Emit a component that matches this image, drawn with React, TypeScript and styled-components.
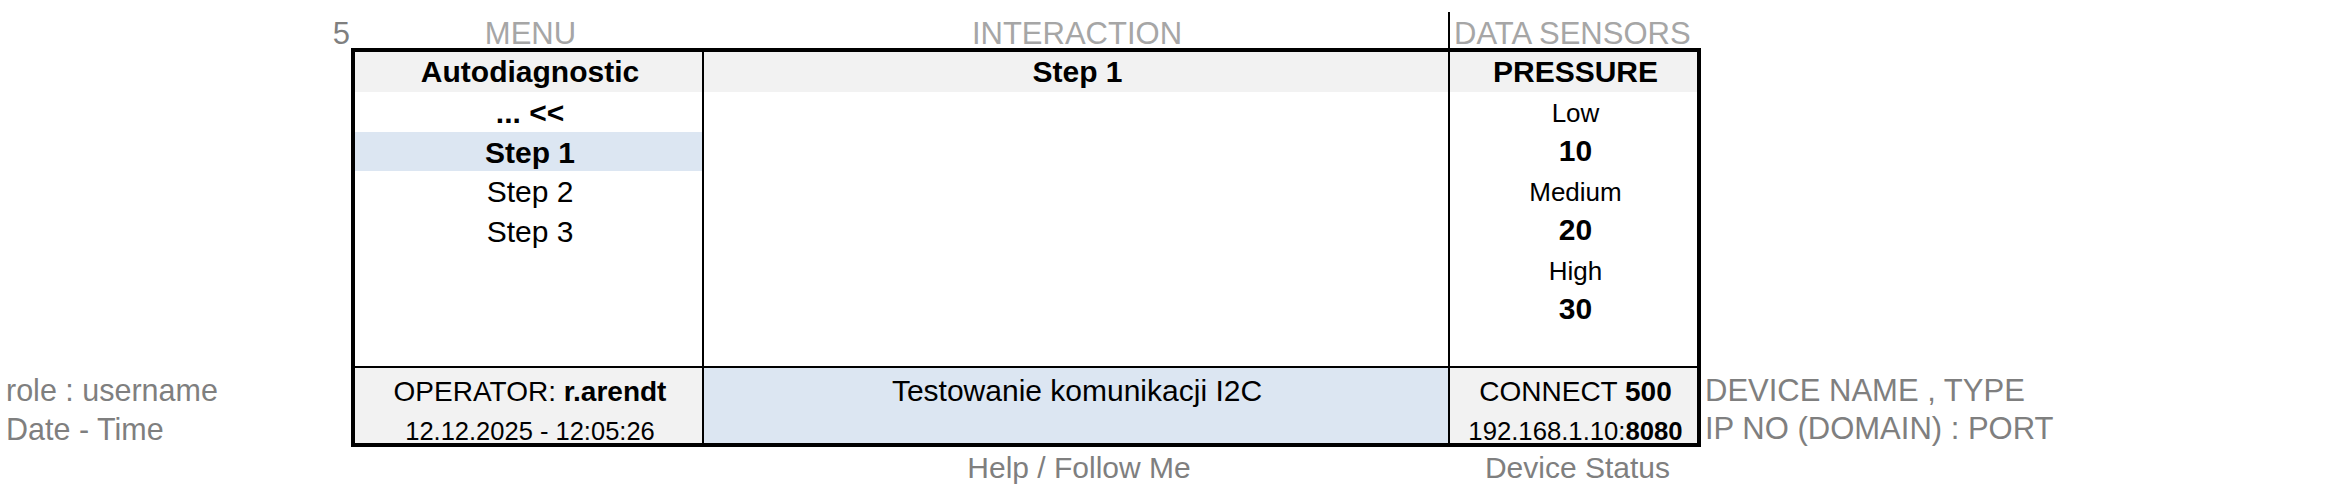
import React from "react";
import styled, { createGlobalStyle } from "styled-components";

const Global = createGlobalStyle`
  html, body { margin: 0; padding: 0; background: #ffffff; }
  * { box-sizing: border-box; }
`;

const Page = styled.div`
  width: 2339px;
  height: 496px;
  padding-top: 12px;
  display: flex;
  flex-direction: column;
  font-family: "Liberation Sans", Arial, sans-serif;
  color: #000;
  background: #fff;
  overflow: hidden;
`;

const Band = styled.div<{ $h?: number }>`
  display: flex;
  align-items: stretch;
  ${(p) => (p.$h ? `height: ${p.$h}px;` : "")}
`;

const Gutter = styled.div<{ $align?: "start" | "end"; $top?: boolean }>`
  width: 351px;
  flex: none;
  display: flex;
  flex-direction: column;
  justify-content: ${(p) => (p.$top ? "flex-start" : "flex-end")};
  align-items: ${(p) => (p.$align === "end" ? "flex-end" : "flex-start")};
`;

/* text placed on a baseline measured from the top of its row */
const Line = styled.div<{
  $size: number;
  $baseline: number;
  $h?: number;
  $color?: string;
  $left?: boolean;
  $pl?: number;
  $pr?: number;
}>`
  ${(p) => (p.$h ? `height: ${p.$h}px; flex: none;` : "")}
  padding-top: ${(p) => p.$baseline - 0.905 * p.$size}px;
  padding-left: ${(p) => p.$pl ?? 0}px;
  padding-right: ${(p) => p.$pr ?? 0}px;
  font-size: ${(p) => p.$size}px;
  line-height: 1.15;
  text-align: ${(p) => (p.$left ? "left" : "center")};
  color: ${(p) => p.$color ?? "inherit"};
  white-space: nowrap;
`;

const LabelGrid = styled.div`
  width: 1350px;
  flex: none;
  display: grid;
  grid-template-columns: 353px 744px 253px;
`;

const DividedLabel = styled.div`
  border-left: 2px solid #000;
`;

const Table = styled.div`
  width: 1350px;
  flex: none;
  border: 4px solid #000;
  display: grid;
  grid-template-columns: 347px 746px 249px;
  grid-template-rows: 40px 274px 77px;
`;

const HeaderCell = styled.div<{ $divided?: boolean; $pl: number }>`
  background: #f2f2f2;
  border-left: ${(p) => (p.$divided ? "2px solid #000" : "none")};
  display: flex;
  align-items: flex-end;
  justify-content: center;
  padding-bottom: 2.5px;
  padding-left: ${(p) => p.$pl}px;
  font-size: 30px;
  font-weight: 700;
  line-height: 1.15;
  white-space: nowrap;
`;

const Column = styled.div<{ $divided?: boolean; $pl?: number }>`
  border-left: ${(p) => (p.$divided ? "2px solid #000" : "none")};
  padding-left: ${(p) => p.$pl ?? 0}px;
  display: flex;
  flex-direction: column;
`;

const ListRow = styled.div<{ $bold?: boolean; $active?: boolean; $size?: number; $pb?: number }>`
  height: 39.5px;
  flex: none;
  display: flex;
  align-items: flex-end;
  justify-content: center;
  padding-bottom: ${(p) => p.$pb ?? 1}px;
  background: ${(p) => (p.$active ? "#dce6f2" : "transparent")};
  font-size: ${(p) => p.$size ?? 30}px;
  font-weight: ${(p) => (p.$bold ? 700 : 400)};
  line-height: 1.15;
  white-space: nowrap;
`;

const MenuRow = styled(ListRow)`
  margin-left: ${(p) => (p.$active ? "-3px" : "0")};
  padding-left: ${(p) => (p.$active ? "3px" : "0")};
`;

const FooterCell = styled.div<{ $divided?: boolean; $tone: "gray" | "blue"; $pl: number }>`
  border-top: 2px solid #000;
  border-left: ${(p) => (p.$divided ? "2px solid #000" : "none")};
  background: ${(p) => (p.$tone === "blue" ? "#dce6f2" : "#f2f2f2")};
  padding-left: ${(p) => p.$pl}px;
  display: flex;
  flex-direction: column;
`;

const NoteStack = styled.div<{ $pad: number }>`
  display: flex;
  flex-direction: column;
  justify-content: flex-end;
  padding-bottom: 4px;
  padding-left: ${(p) => p.$pad}px;
`;

const BottomGrid = styled.div`
  width: 1350px;
  flex: none;
  display: grid;
  grid-template-columns: 353px 744px 253px;
`;

const ROW1 = 33;
const ROW2 = 34;
const NOTE = "#7f7f7f";

const menu = [
  { label: "... <<", bold: true },
  { label: "Step 1", bold: true, active: true },
  { label: "Step 2" },
  { label: "Step 3" },
];

const sensors = [
  { label: "Low", size: 26, pb: 3 },
  { label: "10", size: 30, bold: true, pb: 2.5 },
  { label: "Medium", size: 26, pb: 3 },
  { label: "20", size: 30, bold: true, pb: 2.5 },
  { label: "High", size: 26, pb: 3 },
  { label: "30", size: 30, bold: true, pb: 2.5 },
];

export default function App() {
  return (
    <>
      <Global />
      <Page>
        <Band $h={36}>
          <Gutter $align="end" $top>
            <Line $size={31} $baseline={32} $color={NOTE} $pr={1}>
              5
            </Line>
          </Gutter>
          <LabelGrid>
            <Line $size={31} $baseline={32} $color="#a6a6a6" $pl={6}>
              MENU
            </Line>
            <Line $size={31} $baseline={32} $color="#a6a6a6" $pl={2}>
              INTERACTION
            </Line>
            <DividedLabel>
              <Line $size={31} $baseline={32} $color="#a6a6a6" $left $pl={4}>
                DATA SENSORS
              </Line>
            </DividedLabel>
          </LabelGrid>
        </Band>

        <Band>
          <Gutter>
            <NoteStack $pad={6}>
              <Line $size={30.5} $baseline={ROW1} $h={37.5} $color={NOTE} $left>
                role : username
              </Line>
              <Line $size={30.5} $baseline={ROW2} $h={37.5} $color={NOTE} $left>
                Date - Time
              </Line>
            </NoteStack>
          </Gutter>
          <Table>
            <HeaderCell $pl={3}>Autodiagnostic</HeaderCell>
            <HeaderCell $divided $pl={3}>
              Step 1
            </HeaderCell>
            <HeaderCell $divided $pl={4}>
              PRESSURE
            </HeaderCell>

            <Column $pl={3}>
              {menu.map((m) => (
                <MenuRow key={m.label} $bold={m.bold} $active={m.active}>
                  {m.label}
                </MenuRow>
              ))}
            </Column>
            <Column $divided />
            <Column $divided $pl={4}>
              {sensors.map((s) => (
                <ListRow key={s.label} $bold={s.bold} $size={s.size} $pb={s.pb}>
                  {s.label}
                </ListRow>
              ))}
            </Column>

            <FooterCell $tone="gray" $pl={3}>
              <Line $size={28} $baseline={ROW1} $h={37.5}>
                OPERATOR: <b>r.arendt</b>
              </Line>
              <Line $size={25.5} $baseline={ROW2 + 0.5} $h={37.5}>
                12.12.2025 - 12:05:26
              </Line>
            </FooterCell>
            <FooterCell $tone="blue" $divided $pl={2}>
              <Line $size={30} $baseline={ROW1 + 0.5} $h={37.5}>
                Testowanie komunikacji I2C
              </Line>
            </FooterCell>
            <FooterCell $tone="gray" $divided $pl={4}>
              <Line $size={28} $baseline={ROW1} $h={37.5}>
                CONNECT <b>500</b>
              </Line>
              <Line $size={25.7} $baseline={ROW2 + 0.5} $h={37.5}>
                192.168.1.10:<b>8080</b>
              </Line>
            </FooterCell>
          </Table>
          <NoteStack $pad={4}>
            <Line $size={31} $baseline={ROW1 + 0.5} $h={37.5} $color={NOTE} $left>
              DEVICE NAME , TYPE
            </Line>
            <Line $size={31} $baseline={ROW2} $h={37.5} $color={NOTE} $left>
              IP NO (DOMAIN) : PORT
            </Line>
          </NoteStack>
        </Band>

        <Band>
          <Gutter />
          <BottomGrid>
            <span />
            <Line $size={30} $baseline={31.5} $color={NOTE} $pl={6}>
              Help / Follow Me
            </Line>
            <Line $size={30} $baseline={31.5} $color={NOTE} $pl={6}>
              Device Status
            </Line>
          </BottomGrid>
        </Band>
      </Page>
    </>
  );
}
